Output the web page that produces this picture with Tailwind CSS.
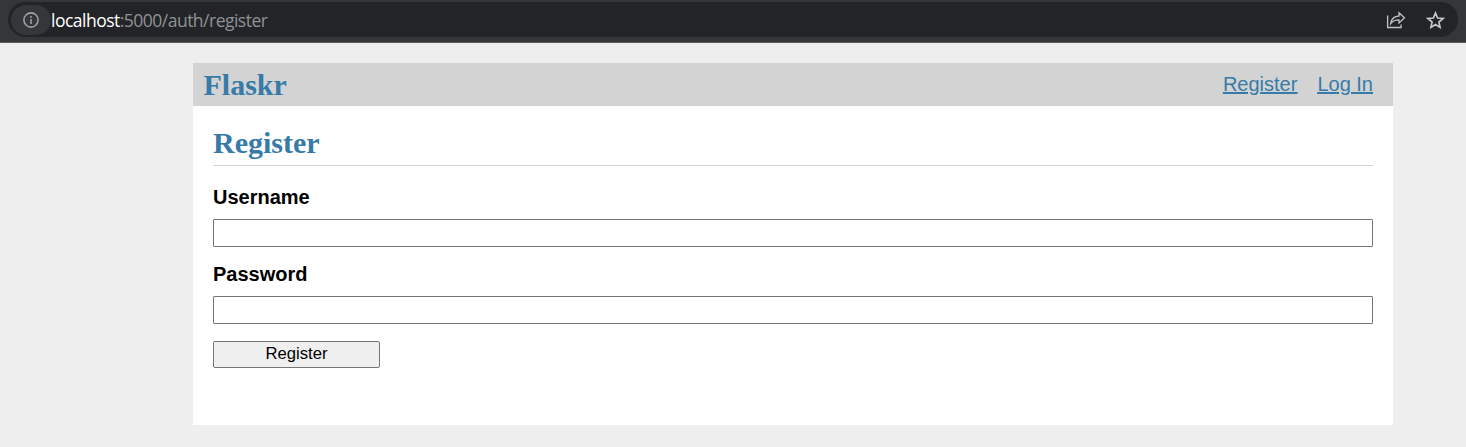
<!DOCTYPE html>
<html lang="en">
<head>
<meta charset="utf-8">
<title>Register - Flaskr</title>
<script src="https://cdn.jsdelivr.net/npm/@tailwindcss/browser@4"></script>
</head>
<body class="h-[447px] overflow-hidden bg-[#eeeeee] font-['Liberation_Sans',Arial,sans-serif] text-[20px] text-black">
<header class="h-[43px] border-b border-[#5c5b5e] bg-[#35363a] px-2 pt-[2px]">
  <div class="flex h-[35px] items-center rounded-full bg-[#232427] pl-[3px] pr-[13px]">
    <div class="flex h-[30px] w-[40px] shrink-0 items-center rounded-full bg-[#35363a] pl-3">
      <svg class="size-4" viewBox="0 0 16 16" fill="none" stroke="#9aa0a6" stroke-width="1.6"><circle cx="8" cy="8" r="7.1"/><path d="M8 7v5M8 4v1.8"/></svg>
    </div>
    <div class="whitespace-nowrap font-['Open_Sans',sans-serif] text-[17.5px] leading-[24px] tracking-[-0.51px] text-[#8f9297]"><span class="text-white">localhost</span>:5000/auth/register</div>
    <div class="ml-auto flex items-center gap-[20px]">
      <svg class="h-[18px] w-[20px]" viewBox="0 0 20 18" fill="none" stroke="#bfc1c3" stroke-width="1.3"><path d="M1.6 4.5v12h13.5v-3"/><path d="M4.7 12.5C5.3 8 8 5.3 13 5V1.7L18.5 6.8 13 12V8.8C9.5 8.7 7 9.7 4.7 12.5Z"/></svg>
      <svg class="h-[18px] w-[19px]" viewBox="0 0 19 18" fill="none" stroke="#c4c6c8" stroke-width="1.7"><path d="M9.5 2l2.1 5 5.4.5-4.1 3.6 1.2 5.3-4.6-2.8-4.6 2.8 1.2-5.3L2 7.5 7.4 7Z"/></svg>
    </div>
  </div>
</header>
<div class="ml-[193px] mt-5 h-[362px] w-[1200px] bg-white">
  <nav class="flex h-[43px] items-center justify-between bg-[#d3d3d3] pl-[10.5px] pr-5 text-[#377ba8]">
    <h1 class="font-['Liberation_Serif',serif] text-[30px] font-bold leading-[43px]">Flaskr</h1>
    <div class="flex gap-5 leading-[41px] underline decoration-2"><a href="#">Register</a><a href="#">Log In</a></div>
  </nav>
  <main class="px-5 pt-5">
    <h2 class="h-[40px] border-b border-[#d3d3d3] font-['Liberation_Serif',serif] text-[30px] font-bold leading-[34px] text-[#377ba8]">Register</h2>
    <form class="flex flex-col pt-[19px]">
      <label class="h-[34px] font-bold leading-[24px]" for="u">Username</label>
      <input id="u" class="h-[28px] rounded-[1px] border border-[#767676] bg-white">
      <label class="mt-[15px] h-[34px] font-bold leading-[24px]" for="p">Password</label>
      <input id="p" type="password" class="h-[28px] rounded-[1px] border border-[#767676] bg-white">
      <button type="button" class="mt-[17px] h-[27px] w-[167px] rounded-[2px] border border-[#767676] bg-[#efefef] pb-[2px] text-[16.67px] leading-[23px]">Register</button>
    </form>
  </main>
</div>
</body>
</html>
